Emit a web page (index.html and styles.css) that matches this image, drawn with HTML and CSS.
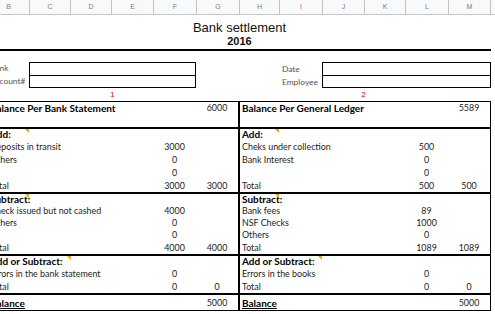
FILE: index.html
```html
<!DOCTYPE html>
<html>
<head>
<meta charset="utf-8">
<link rel="stylesheet" href="styles.css">
</head>
<body>
<div class="sheet">
  <div class="colhead">
    <div class="ch">B</div><div class="ch">C</div><div class="ch">D</div><div class="ch">E</div>
    <div class="ch">F</div><div class="ch">G</div><div class="ch">H</div><div class="ch">I</div>
    <div class="ch">J</div><div class="ch">K</div><div class="ch">L</div><div class="ch">M</div>
    <div class="ch ch-last"></div>
  </div>

  <div class="title">Bank settlement</div>
  <div class="year">2016</div>
  <div class="rule"></div>

  <div class="info">
    <div class="lbl-r">Bank</div>
    <div class="box box-top"></div>
    <div></div>
    <div class="lbl-l">Date</div>
    <div class="box box-top"></div>
    <div class="lbl-r">Account#</div>
    <div class="box box-bot"></div>
    <div></div>
    <div class="lbl-l">Employee</div>
    <div class="box box-bot"></div>
  </div>

  <div class="marks">
    <div></div><div class="mk">1</div><div></div><div class="mk">2</div><div></div>
  </div>

  <div class="ledger">
    <div class="row first">
      <div class="lab b">Balance Per Bank Statement</div><div class="n"></div><div class="n g">6000</div>
      <div class="lab h b">Balance Per General Ledger</div><div class="n"></div><div class="n m">5589</div>
    </div>
    <div class="row">
      <div class="lab"></div><div class="n"></div><div class="n g"></div>
      <div class="lab h"></div><div class="n"></div><div class="n m"></div>
    </div>

    <div class="row sec">
      <div class="lab b">Add:<span class="note note-b"></span></div><div class="n"></div><div class="n g"></div>
      <div class="lab h b">Add:<span class="note note-h"></span></div><div class="n"></div><div class="n m"></div>
    </div>
    <div class="row">
      <div class="lab">Deposits in transit</div><div class="n">3000</div><div class="n g"></div>
      <div class="lab h">Cheks under collection</div><div class="n">500</div><div class="n m"></div>
    </div>
    <div class="row">
      <div class="lab">Others</div><div class="n">0</div><div class="n g"></div>
      <div class="lab h">Bank Interest</div><div class="n">0</div><div class="n m"></div>
    </div>
    <div class="row">
      <div class="lab"></div><div class="n">0</div><div class="n g"></div>
      <div class="lab h"></div><div class="n">0</div><div class="n m"></div>
    </div>
    <div class="row">
      <div class="lab">Total</div><div class="n">3000</div><div class="n g">3000</div>
      <div class="lab h">Total</div><div class="n">500</div><div class="n m">500</div>
    </div>

    <div class="row sec">
      <div class="lab b">Subtract:<span class="note note-b"></span></div><div class="n"></div><div class="n g"></div>
      <div class="lab h b">Subtract:<span class="note note-h"></span></div><div class="n"></div><div class="n m"></div>
    </div>
    <div class="row r12">
      <div class="lab">Check issued but not cashed</div><div class="n">4000</div><div class="n g"></div>
      <div class="lab h">Bank fees</div><div class="n">89</div><div class="n m"></div>
    </div>
    <div class="row r12">
      <div class="lab">Others</div><div class="n">0</div><div class="n g"></div>
      <div class="lab h">NSF Checks</div><div class="n">1000</div><div class="n m"></div>
    </div>
    <div class="row r12">
      <div class="lab"></div><div class="n">0</div><div class="n g"></div>
      <div class="lab h">Others</div><div class="n">0</div><div class="n m"></div>
    </div>
    <div class="row">
      <div class="lab">Total</div><div class="n">4000</div><div class="n g">4000</div>
      <div class="lab h">Total</div><div class="n">1089</div><div class="n m">1089</div>
    </div>

    <div class="row sec">
      <div class="lab b">Add or Subtract:<span class="note note-c"></span></div><div class="n"></div><div class="n g"></div>
      <div class="lab h b">Add or Subtract:<span class="note note-i"></span></div><div class="n"></div><div class="n m"></div>
    </div>
    <div class="row">
      <div class="lab">Errors in the bank statement</div><div class="n">0</div><div class="n g"></div>
      <div class="lab h">Errors in the books</div><div class="n">0</div><div class="n m"></div>
    </div>
    <div class="row">
      <div class="lab">Total</div><div class="n">0</div><div class="n g">0</div>
      <div class="lab h">Total</div><div class="n">0</div><div class="n m">0</div>
    </div>

    <div class="row sec last">
      <div class="lab b u">Balance</div><div class="n"></div><div class="n g">5000</div>
      <div class="lab h b u">Balance</div><div class="n"></div><div class="n m">5000</div>
    </div>
  </div>
</div>
</body>
</html>
```

FILE: styles.css
```css
html, body {
  margin: 0;
  padding: 0;
  background: #fff;
  overflow: hidden;
}

body {
  font-family: Lato, "Liberation Sans", sans-serif;
  color: #222;
}

.sheet {
  margin-left: -12px;
  width: 540px;
}

/* column headers */
.colhead {
  display: grid;
  grid-template-columns: 42px 41px 41px 42px 43px 43px 40px 43px 42px 41px 43px 42px 40px;
  height: 15px;
  box-sizing: border-box;
  border-bottom: 1px solid #c4c4c4;
  background: #f8f9fa;
}

.ch {
  border-right: 1px solid #c4c4c4;
  font-family: "Liberation Sans", sans-serif;
  font-size: 7px;
  line-height: 14px;
  color: #808080;
  text-align: center;
}

.ch-last {
  border-right: none;
}

/* title */
.title {
  width: 503px;
  padding-top: 5px;
  text-align: center;
  font-family: "Liberation Sans", sans-serif;
  font-size: 13px;
  line-height: 15px;
  color: #111;
}

.year {
  width: 503px;
  text-align: center;
  font-family: "Liberation Sans", sans-serif;
  font-size: 11px;
  font-weight: bold;
  line-height: 13px;
  color: #111;
}

.rule {
  width: 503px;
  height: 2px;
  margin-top: 1px;
  background: #000;
}

/* info boxes */
.info {
  display: grid;
  grid-template-columns: 41px 167px 83px 43px 169px;
  grid-template-rows: 13px 13px;
  margin-top: 11px;
}

.lbl-r,
.lbl-l {
  font-size: 8.4px;
  line-height: 12px;
  color: #555;
  white-space: nowrap;
}

.lbl-r {
  padding-left: 2px;
}

.lbl-l {
  padding-left: 3px;
  padding-top: 1px;
}

.box {
  box-sizing: border-box;
  border: 1px solid #000;
  border-bottom: none;
}

.box-bot {
  border-bottom: 1px solid #000;
}

/* markers */
.marks {
  display: grid;
  grid-template-columns: 41px 167px 83px 169px 43px;
  height: 13px;
}

.mk {
  text-align: center;
  color: #e00;
  font-family: "Liberation Sans", sans-serif;
  font-size: 8px;
  line-height: 12px;
  padding-top: 1px;
}

/* ledger */
.row {
  display: grid;
  grid-template-columns: 165px 43px 43px 166px 43px 43px;
  width: 503px;
  height: 13px;
  box-sizing: border-box;
  font-size: 8.9px;
  line-height: 13px;
}

.row.r12 {
  height: 12px;
  line-height: 12px;
}

.row.first {
  border-top: 1px solid #000;
  line-height: 12px;
}

.row.sec {
  border-top: 2px solid #000;
  line-height: 11px;
}

.row.last {
  height: 18px;
  line-height: 16px;
  border-bottom: 1px solid #000;
}

.lab {
  position: relative;
  padding-left: 2px;
  white-space: nowrap;
}

.lab.h {
  border-left: 1px solid #000;
  padding-left: 2px;
}

.n {
  text-align: center;
  white-space: nowrap;
}

.n.g {
  border-right: 1px solid #000;
}

.n.m {
  border-right: 1px solid #000;
}

.b {
  font-weight: bold;
  font-size: 10px;
  color: #000;
}

.u {
  text-decoration: underline;
}

.note {
  position: absolute;
  top: 0;
  width: 0;
  height: 0;
  border-top: 4px solid #f2a900;
  border-left: 4px solid transparent;
}

.note-b { left: 37px; }
.note-c { left: 79px; }
.note-h { left: 35px; }
.note-i { left: 78px; }
```
